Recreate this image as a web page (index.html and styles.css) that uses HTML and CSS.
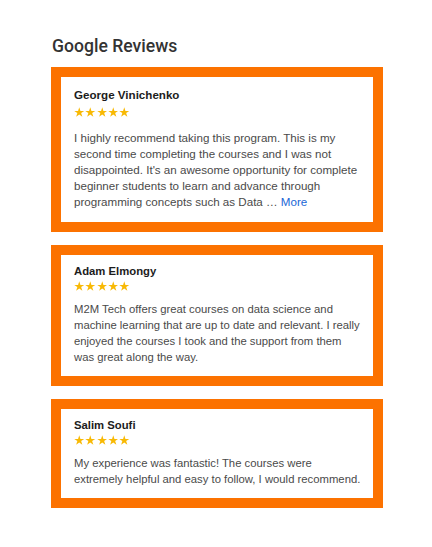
FILE: index.html
```html
<!DOCTYPE html>
<html lang="en">
<head>
<meta charset="utf-8">
<title>Google Reviews</title>
<link rel="stylesheet" href="styles.css">
</head>
<body>
<main class="reviews">
  <h2 class="reviews__title">Google Reviews</h2>
  <div class="reviews__list">
    <article class="review review--lead">
      <h3 class="review__name">George Vinichenko</h3>
      <div class="review__stars" aria-label="5 stars">
        <svg class="star" viewBox="0 0 20 18.1"><polygon points="10,0 12.245,6.91 19.511,6.91 13.633,11.18 15.878,18.09 10,13.82 4.122,18.09 6.367,11.18 0.489,6.91 7.755,6.91"/></svg>
        <svg class="star" viewBox="0 0 20 18.1"><polygon points="10,0 12.245,6.91 19.511,6.91 13.633,11.18 15.878,18.09 10,13.82 4.122,18.09 6.367,11.18 0.489,6.91 7.755,6.91"/></svg>
        <svg class="star" viewBox="0 0 20 18.1"><polygon points="10,0 12.245,6.91 19.511,6.91 13.633,11.18 15.878,18.09 10,13.82 4.122,18.09 6.367,11.18 0.489,6.91 7.755,6.91"/></svg>
        <svg class="star" viewBox="0 0 20 18.1"><polygon points="10,0 12.245,6.91 19.511,6.91 13.633,11.18 15.878,18.09 10,13.82 4.122,18.09 6.367,11.18 0.489,6.91 7.755,6.91"/></svg>
        <svg class="star" viewBox="0 0 20 18.1"><polygon points="10,0 12.245,6.91 19.511,6.91 13.633,11.18 15.878,18.09 10,13.82 4.122,18.09 6.367,11.18 0.489,6.91 7.755,6.91"/></svg>
      </div>
      <p class="review__text">I highly recommend taking this program. This is my second time completing the courses and I was not disappointed. It's an awesome opportunity for complete beginner students to learn and advance through programming concepts such as Data … <a class="review__more" href="#">More</a></p>
    </article>
    <article class="review">
      <h3 class="review__name">Adam Elmongy</h3>
      <div class="review__stars" aria-label="5 stars">
        <svg class="star" viewBox="0 0 20 18.1"><polygon points="10,0 12.245,6.91 19.511,6.91 13.633,11.18 15.878,18.09 10,13.82 4.122,18.09 6.367,11.18 0.489,6.91 7.755,6.91"/></svg>
        <svg class="star" viewBox="0 0 20 18.1"><polygon points="10,0 12.245,6.91 19.511,6.91 13.633,11.18 15.878,18.09 10,13.82 4.122,18.09 6.367,11.18 0.489,6.91 7.755,6.91"/></svg>
        <svg class="star" viewBox="0 0 20 18.1"><polygon points="10,0 12.245,6.91 19.511,6.91 13.633,11.18 15.878,18.09 10,13.82 4.122,18.09 6.367,11.18 0.489,6.91 7.755,6.91"/></svg>
        <svg class="star" viewBox="0 0 20 18.1"><polygon points="10,0 12.245,6.91 19.511,6.91 13.633,11.18 15.878,18.09 10,13.82 4.122,18.09 6.367,11.18 0.489,6.91 7.755,6.91"/></svg>
        <svg class="star" viewBox="0 0 20 18.1"><polygon points="10,0 12.245,6.91 19.511,6.91 13.633,11.18 15.878,18.09 10,13.82 4.122,18.09 6.367,11.18 0.489,6.91 7.755,6.91"/></svg>
      </div>
      <p class="review__text">M2M Tech offers great courses on data science and machine learning that are up to date and relevant. I really enjoyed the courses I took and the support from them was great along the way.</p>
    </article>
    <article class="review">
      <h3 class="review__name">Salim Soufi</h3>
      <div class="review__stars" aria-label="5 stars">
        <svg class="star" viewBox="0 0 20 18.1"><polygon points="10,0 12.245,6.91 19.511,6.91 13.633,11.18 15.878,18.09 10,13.82 4.122,18.09 6.367,11.18 0.489,6.91 7.755,6.91"/></svg>
        <svg class="star" viewBox="0 0 20 18.1"><polygon points="10,0 12.245,6.91 19.511,6.91 13.633,11.18 15.878,18.09 10,13.82 4.122,18.09 6.367,11.18 0.489,6.91 7.755,6.91"/></svg>
        <svg class="star" viewBox="0 0 20 18.1"><polygon points="10,0 12.245,6.91 19.511,6.91 13.633,11.18 15.878,18.09 10,13.82 4.122,18.09 6.367,11.18 0.489,6.91 7.755,6.91"/></svg>
        <svg class="star" viewBox="0 0 20 18.1"><polygon points="10,0 12.245,6.91 19.511,6.91 13.633,11.18 15.878,18.09 10,13.82 4.122,18.09 6.367,11.18 0.489,6.91 7.755,6.91"/></svg>
        <svg class="star" viewBox="0 0 20 18.1"><polygon points="10,0 12.245,6.91 19.511,6.91 13.633,11.18 15.878,18.09 10,13.82 4.122,18.09 6.367,11.18 0.489,6.91 7.755,6.91"/></svg>
      </div>
      <p class="review__text">My experience was fantastic! The courses were extremely helpful and easy to follow, I would recommend.</p>
    </article>
  </div>
</main>
</body>
</html>
```

FILE: styles.css
```css
html, body {
  margin: 0;
  padding: 0;
  background: #ffffff;
}

.reviews {
  padding: 36px 0 0 51px;
  width: 332px;
}

.reviews__title {
  margin: 0 0 10px 1px;
  font-family: Roboto, "Liberation Sans", sans-serif;
  font-weight: 500;
  font-size: 17.6px;
  line-height: 21px;
  color: #333333;
}

.reviews__list {
  display: flex;
  flex-direction: column;
  gap: 13px;
}

.review {
  border: 10px solid #fc7200;
  background: #ffffff;
  padding: 9px 10px 11px 13px;
  font-family: "Liberation Sans", Arial, sans-serif;
  font-size: 11.3px;
}

.review--lead {
  padding-top: 11px;
  padding-bottom: 12px;
  font-size: 11.6px;
}

.review__name {
  margin: 0;
  font-size: 1em;
  line-height: 14px;
  font-weight: 700;
  color: #1c1c1c;
}

.review__stars {
  display: flex;
  gap: 0.8px;
  margin-top: 3px;
  height: 10px;
}

.review--lead .review__stars {
  margin-top: 5px;
}

.star {
  width: 10.5px;
  height: 10px;
  fill: #f8b904;
}

.review__text {
  margin: 10px 0 0;
  line-height: 16px;
  color: #4a4a4a;
}

.review--lead .review__text {
  margin-top: 13px;
}

.review__more {
  color: #1a66d6;
  text-decoration: none;
}
```
